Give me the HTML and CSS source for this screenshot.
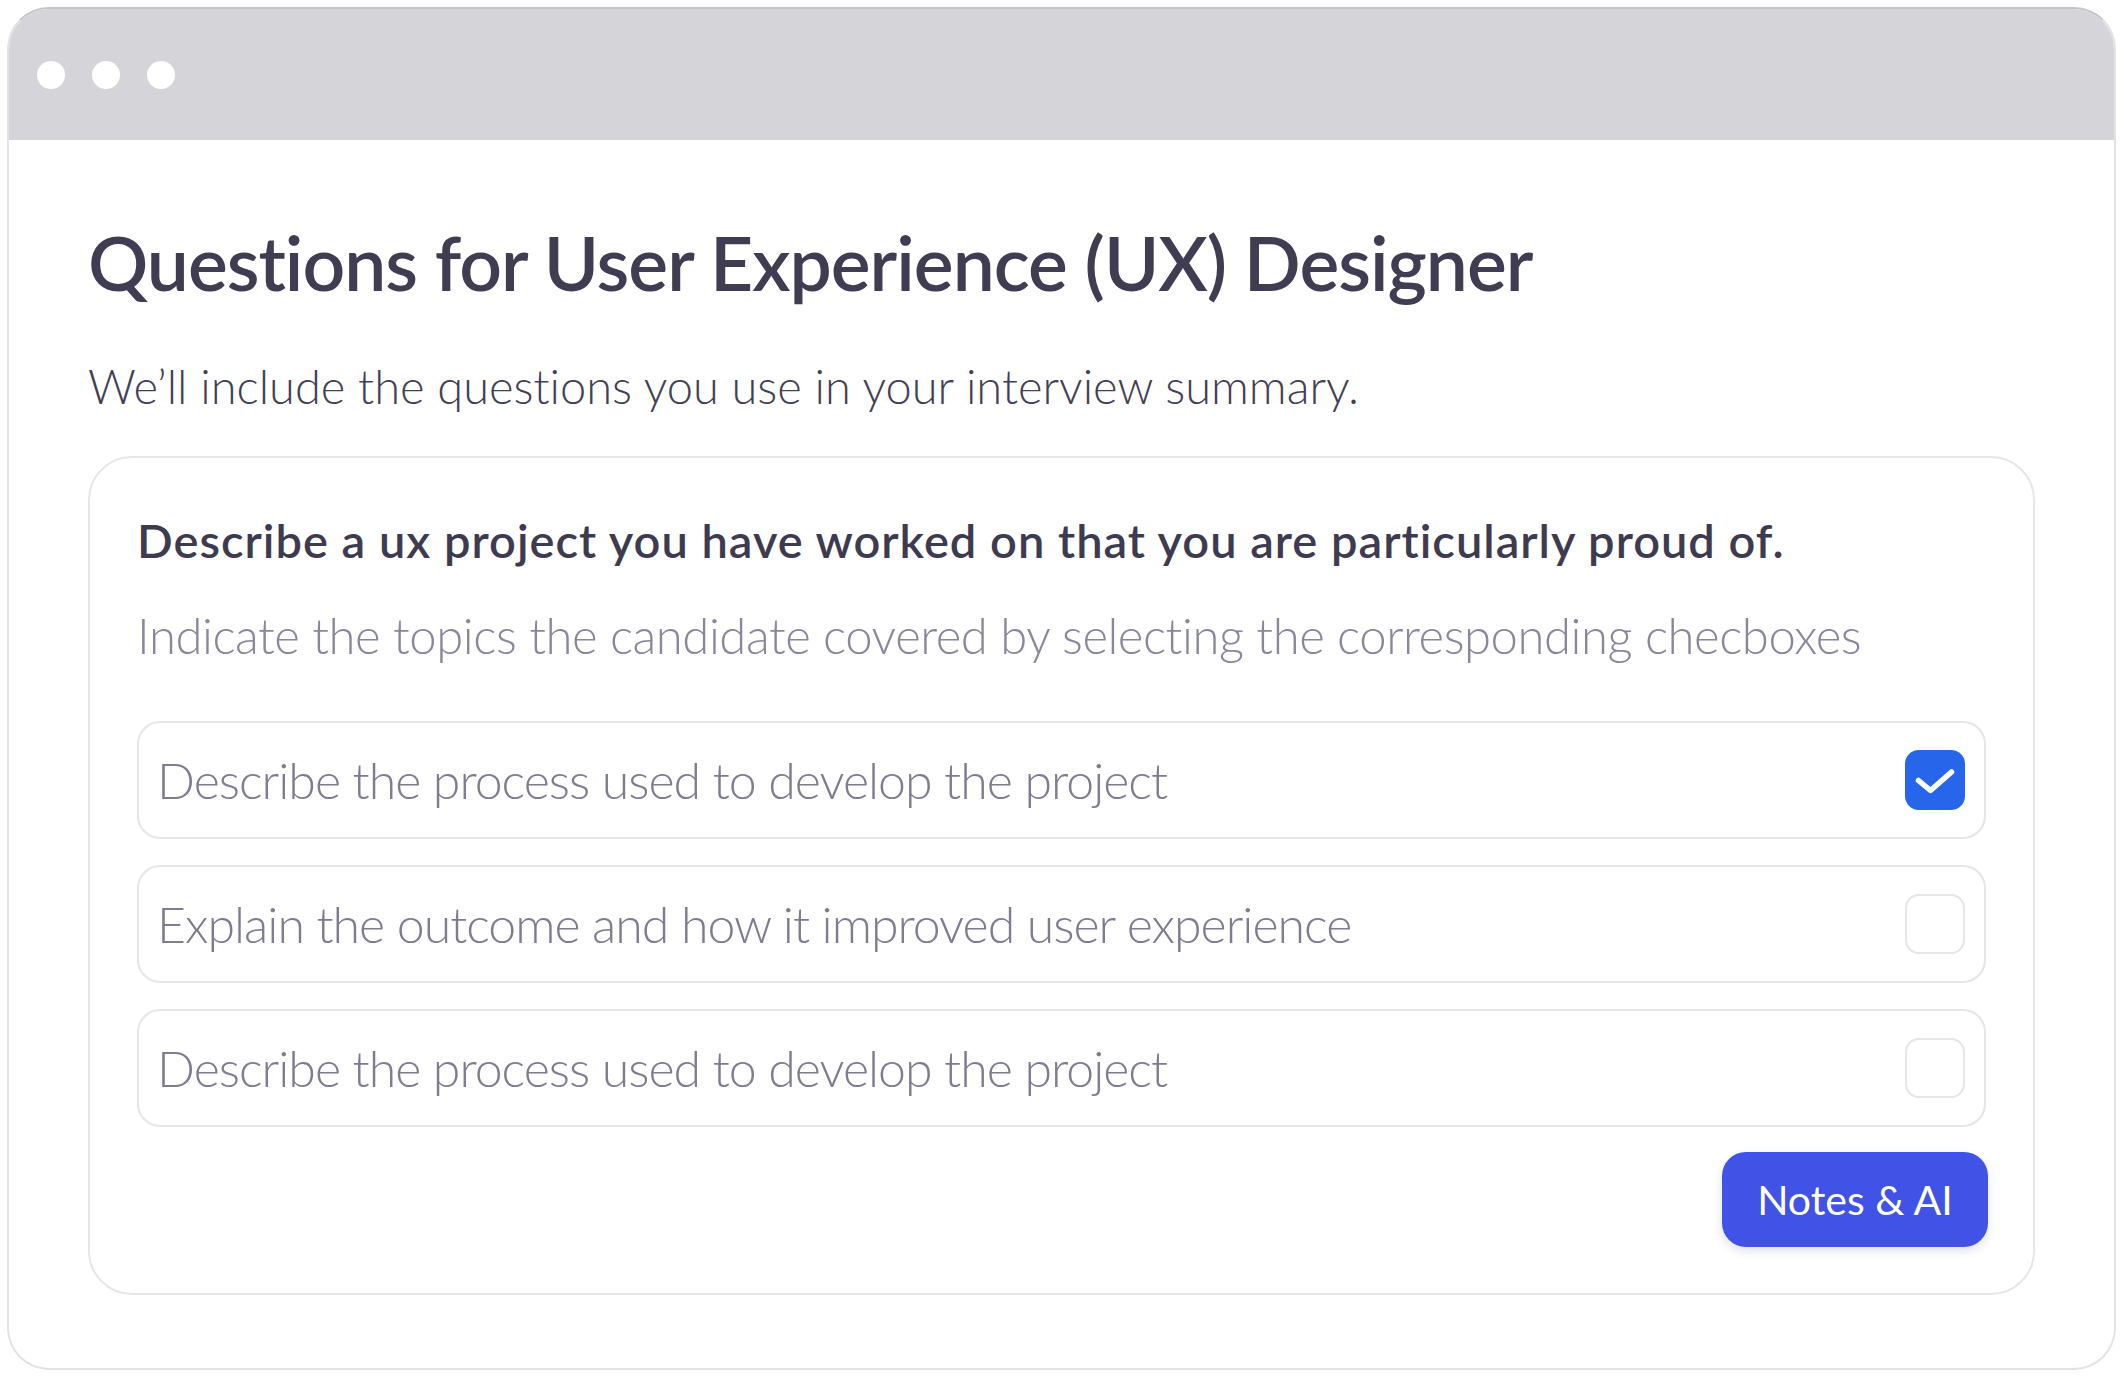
FILE: index.html
```html
<!DOCTYPE html>
<html lang="en">
<head>
  <meta charset="UTF-8" />
  <title>Interview Questions</title>
  <link rel="stylesheet" href="styles.css">
</head>
<body>
  <div class="window">
    <div class="titlebar">
      <span class="dot"></span>
      <span class="dot"></span>
      <span class="dot"></span>
    </div>
    <div class="content">
      <h1 class="title">Questions for User Experience (UX) Designer</h1>
      <p class="subtitle">We’ll include the questions you use in your interview summary.</p>

      <div class="card">
        <h2 class="question">Describe a ux project you have worked on that you are particularly proud of.</h2>
        <p class="hint">Indicate the topics the candidate covered by selecting the corresponding checboxes</p>

        <div class="topics">
          <label class="topic">
            <span class="topic-text">Describe the process used to develop the project</span>
            <span class="box checked">
              <svg width="60" height="60" viewBox="0 0 60 60"><path d="M13.5 30.5 L25.5 40.5 L46.5 22" fill="none" stroke="#fff" stroke-width="5.5" stroke-linecap="round" stroke-linejoin="round"/></svg>
            </span>
          </label>
          <label class="topic">
            <span class="topic-text">Explain the outcome and how it improved user experience</span>
            <span class="box"></span>
          </label>
          <label class="topic">
            <span class="topic-text">Describe the process used to develop the project</span>
            <span class="box"></span>
          </label>
        </div>

        <div class="actions">
          <button class="notes-btn">Notes &amp; AI</button>
        </div>
      </div>
    </div>
  </div>
</body>
</html>
```
FILE: styles.css
```css
body {
  margin: 0;
  background: #fff;
  font-family: Lato, "Open Sans", sans-serif;
  font-variant-ligatures: none;
}
.window {
  box-sizing: border-box;
  margin: 7px;
  width: 2109px;
  height: 1363px;
  border: 2px solid #e3e3e6;
  border-top-color: #c4c3c9;
  border-radius: 42px;
  overflow: hidden;
  background: #fff;
}
.titlebar {
  height: 131px;
  background: #d5d4d9;
  display: flex;
  align-items: center;
  gap: 27px;
  padding-left: 28px;
}
.dot {
  width: 28px;
  height: 28px;
  border-radius: 50%;
  background: #fff;
}
.content {
  padding: 85px 79px 0;
}
.title {
  margin: 0;
  font-size: 75px;
  line-height: 75px;
  font-weight: 600;
  letter-spacing: -1px;
  color: #403d53;
}
.subtitle {
  margin: 63px 0 0;
  font-size: 47px;
  line-height: 47px;
  font-weight: 300;
  color: #433f56;
}
.card {
  margin-top: 46px;
  border: 2px solid #e6e6e9;
  border-radius: 44px;
  padding: 61px 47px 46px;
}
.question {
  margin: 0;
  font-size: 47px;
  line-height: 43px;
  font-weight: 600;
  letter-spacing: 1px;
  color: #3e3b51;
}
.hint {
  margin: 47px 0 0;
  font-size: 49px;
  line-height: 52px;
  font-weight: 300;
  letter-spacing: -0.45px;
  white-space: nowrap;
  color: #89879b;
}
.topics {
  margin-top: 60px;
  display: flex;
  flex-direction: column;
  gap: 26px;
}
.topic {
  box-sizing: border-box;
  height: 118px;
  display: flex;
  align-items: center;
  justify-content: space-between;
  border: 2px solid #e6e6e9;
  border-radius: 23px;
  padding: 0 19px 0 18px;
}
.topic-text {
  font-size: 50px;
  line-height: 56px;
  font-weight: 300;
  letter-spacing: -1px;
  color: #7e7c90;
}
.box {
  box-sizing: border-box;
  width: 60px;
  height: 60px;
  border: 2px solid #e6e6e9;
  border-radius: 14px;
}
.box.checked {
  border: none;
  background: #2766ea;
}
.box svg {
  display: block;
}
.actions {
  margin-top: 25px;
  display: flex;
  justify-content: flex-end;
}
.notes-btn {
  width: 266px;
  height: 95px;
  margin-right: -2px;
  border: none;
  border-radius: 24px;
  background: #4153e6;
  color: #fff;
  font-family: Lato, sans-serif;
  font-size: 41px;
  font-weight: 400;
  box-shadow: 0 4px 10px rgba(40, 50, 150, 0.15);
}
```
